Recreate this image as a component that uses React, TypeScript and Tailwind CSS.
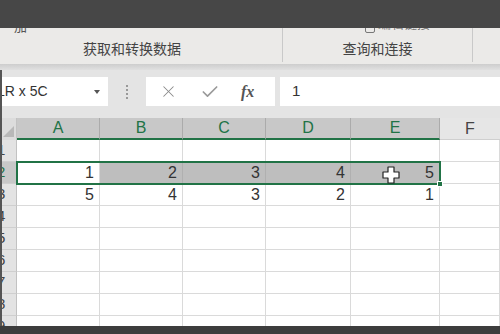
import React from "react";
import { X, Check } from "lucide-react";

const cols = [
  { l: "A", w: "w-[83px]", sel: true },
  { l: "B", w: "w-[83px]", sel: true },
  { l: "C", w: "w-[83px]", sel: true },
  { l: "D", w: "w-[85px]", sel: true },
  { l: "E", w: "w-[89px]", sel: true },
  { l: "F", w: "w-[60px]", sel: false },
];

const rows: (number | null)[][] = [
  [null, null, null, null, null, null],
  [1, 2, 3, 4, 5, null],
  [5, 4, 3, 2, 1, null],
  [null, null, null, null, null, null],
  [null, null, null, null, null, null],
  [null, null, null, null, null, null],
  [null, null, null, null, null, null],
  [null, null, null, null, null, null],
  [null, null, null, null, null, null],
];

export default function App() {
  return (
    <div className="w-[500px] h-[334px] overflow-hidden flex flex-col bg-white font-['Liberation_Sans','Noto_Sans_CJK_SC',sans-serif]">
      {/* title bar */}
      <div className="h-[28px] shrink-0 bg-[#474747]" />

      {/* ribbon groups */}
      <div className="h-[36px] shrink-0 bg-[#ebeae8] flex text-[#444]">
        <div className="w-[283px] flex flex-col border-r border-[#c9c9c9] mb-[2px]">
          <div className="h-[5px] overflow-hidden pl-[14px]">
            <span className="block -mt-[11px] text-[13px] text-[#555]">加</span>
          </div>
          <div className="flex-1 flex items-center justify-center pr-[18px] text-[14px] pt-[4px]">
            获取和转换数据
          </div>
        </div>
        <div className="w-[190px] flex flex-col border-r border-[#c9c9c9] mb-[2px]">
          <div className="h-[5px] overflow-hidden pl-[82px] flex items-end gap-[3px]">
            <span className="block w-[10px] h-[8px] border border-[#777] rounded-[2px]" />
            <span className="block -mt-[11px] text-[13px] text-[#777]">编辑链接</span>
          </div>
          <div className="flex-1 flex items-center justify-center text-[14px] pt-[4px]">
            查询和连接
          </div>
        </div>
        <div className="flex-1" />
      </div>

      <div className="h-[6px] shrink-0 bg-gradient-to-b from-[#cdcdcd] to-[#e0e0e0]" />

      {/* formula bar */}
      <div className="h-[48px] shrink-0 bg-[#e4e4e4] flex items-start pt-[7px] border-l-2 border-[#555]">
        <div className="w-[106px] h-[29px] bg-white flex items-center justify-between pr-[8px] overflow-hidden">
          <span className="text-[14px] text-[#333] -ml-[5px] whitespace-nowrap">LR x 5C</span>
          <span className="w-0 h-0 border-l-[3px] border-r-[3px] border-t-[4px] border-l-transparent border-r-transparent border-t-[#555]" />
        </div>
        <div className="w-[38px] h-[29px] flex flex-col items-center justify-center gap-[2px]">
          <span className="w-[2px] h-[2px] bg-[#999]" />
          <span className="w-[2px] h-[2px] bg-[#999]" />
          <span className="w-[2px] h-[2px] bg-[#999]" />
          <span className="w-[2px] h-[2px] bg-[#999]" />
        </div>
        <div className="w-[129px] h-[29px] bg-white flex items-center pl-[13px]">
          <X className="w-[19px] h-[19px] text-[#8a8a8a]" strokeWidth={1.3} />
          <Check className="w-[20px] h-[20px] text-[#9a9a9a] ml-[22px]" strokeWidth={2} />
          <span className="ml-[21px] text-[16px] italic font-bold text-[#555] font-['Liberation_Serif',serif]">fx</span>
        </div>
        <div className="ml-[5px] flex-1 h-[29px] bg-white flex items-center pl-[12px]">
          <span className="text-[15px] text-[#333]">1</span>
        </div>
      </div>

      {/* grid */}
      <div className="flex-1 relative overflow-hidden border-l-2 border-[#555]">
        <div className="flex h-[22px]">
          <div className="w-[15px] bg-[#dcdcdc] border-r border-[#c2c2c2] relative">
            <svg className="absolute right-[2px] bottom-[3px]" width="11" height="11" viewBox="0 0 11 11">
              <path d="M11 0 L11 11 L0 11 Z" fill="#b8b8b8" />
            </svg>
          </div>
          {cols.map((c) => (
            <div
              key={c.l}
              className={
                c.sel
                  ? `${c.w} bg-[#c8c8c8] border-r border-[#ababab] border-b-2 border-b-[#217346] flex items-center justify-center text-[16px] text-[#217346]`
                  : `${c.w} bg-[#e6e6e6] border-b border-[#cfcfcf] flex items-center justify-center text-[16px] text-[#444]`
              }
            >
              {c.l}
            </div>
          ))}
        </div>
        {rows.map((r, i) => (
          <div key={i} className="flex h-[22px]">
            <div
              className={
                i === 1
                  ? "w-[15px] bg-[#c8c8c8] border-r border-[#c2c2c2] border-b border-b-[#cfcfcf] overflow-hidden flex items-center text-[15px] text-[#217346]"
                  : "w-[15px] bg-[#e3e3e3] border-r border-[#c2c2c2] border-b border-b-[#cfcfcf] overflow-hidden flex items-center text-[15px] text-[#444]"
              }
            >
              <span className="-ml-[5px]">{i + 1}</span>
            </div>
            {cols.map((c, j) => (
              <div
                key={c.l}
                className={
                  i === 1 && j > 0 && j < 5
                    ? `${c.w} bg-[#bebebe] border-r border-b border-[#b0b0b0] flex items-center justify-end pr-[5px] text-[16px] text-[#333]`
                    : `${c.w} border-r border-b border-[#dadada] flex items-center justify-end pr-[5px] text-[16px] text-[#333]`
                }
              >
                {r[j]}
              </div>
            ))}
          </div>
        ))}

        {/* selection outline */}
        <div className="absolute left-[14px] top-[43px] w-[425px] h-[24px] border-2 border-[#217346] pointer-events-none" />
        <div className="absolute left-[435px] top-[63px] w-[6px] h-[6px] bg-[#217346] border border-white" />

        {/* cursor */}
        <svg className="absolute left-[380px] top-[48px]" width="18" height="18" viewBox="0 0 18 18">
          <path
            d="M6 1 H12 V6 H17 V12 H12 V17 H6 V12 H1 V6 H6 Z"
            fill="#fff"
            stroke="#222"
            strokeWidth="1.2"
            strokeLinejoin="round"
          />
        </svg>
      </div>

      <div className="h-[8px] shrink-0 bg-[#3d3d3d]" />
    </div>
  );
}
